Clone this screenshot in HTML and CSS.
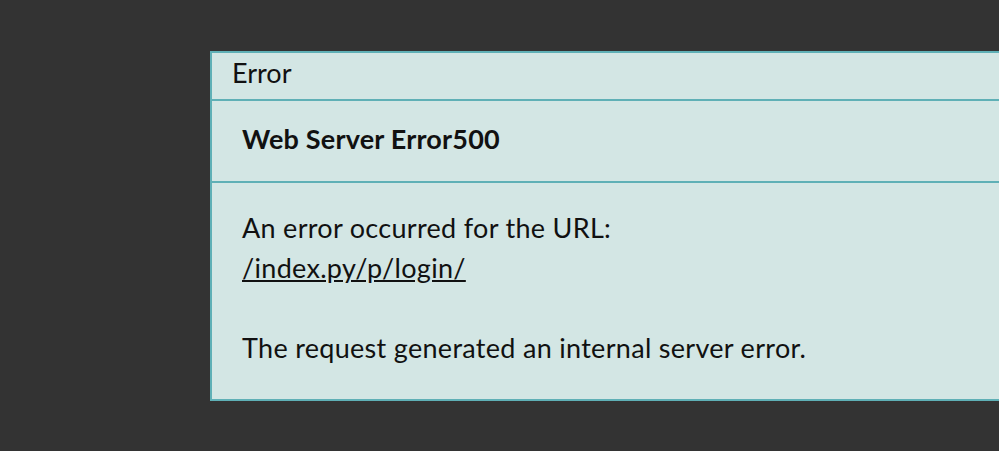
FILE: index.html
```html
<!DOCTYPE html>
<html lang="en">
<head>
  <meta charset="UTF-8" />
  <title>Error</title>
  <link rel="stylesheet" href="styles.css">
</head>
<body>
  <div class="panel">
    <div class="panel-head">Error</div>
    <div class="panel-title">Web Server Error500</div>
    <div class="panel-body">
      <p>An error occurred for the URL:<br><a href="#">/index.py/p/login/</a></p>
      <p>The request generated an internal server error.</p>
    </div>
  </div>
</body>
</html>
```

FILE: styles.css
```css
body {
  margin: 0;
  background-color: #333333;
  font-family: Lato, 'Open Sans', sans-serif;
  color: #111;
  overflow: hidden;
}

/* panel is cut off by the right edge of the window, so no right border */
.panel {
  margin: 51px 0 0 210px;
  background-color: #d3e6e4;
  border: 2px solid #5fb0b6;
  border-right: none;
}

.panel-head {
  height: 46px;
  padding-left: 20px;
  font-size: 27px;
  line-height: 40px;
  border-bottom: 2px solid #5fb0b6;
}

.panel-title {
  height: 62px;
  padding: 18px 0 0 30px;
  font-size: 27px;
  font-weight: bold;
  letter-spacing: 0.2px;
  line-height: 40px;
  border-bottom: 2px solid #5fb0b6;
}

.panel-body {
  padding: 25px 30px 31px;
  font-size: 27px;
  letter-spacing: 0.3px;
  line-height: 40px;
}

.panel-body p {
  margin: 0 0 40px;
}

.panel-body p:last-child {
  margin-bottom: 0;
}

.panel-body a {
  color: #111;
}
```
